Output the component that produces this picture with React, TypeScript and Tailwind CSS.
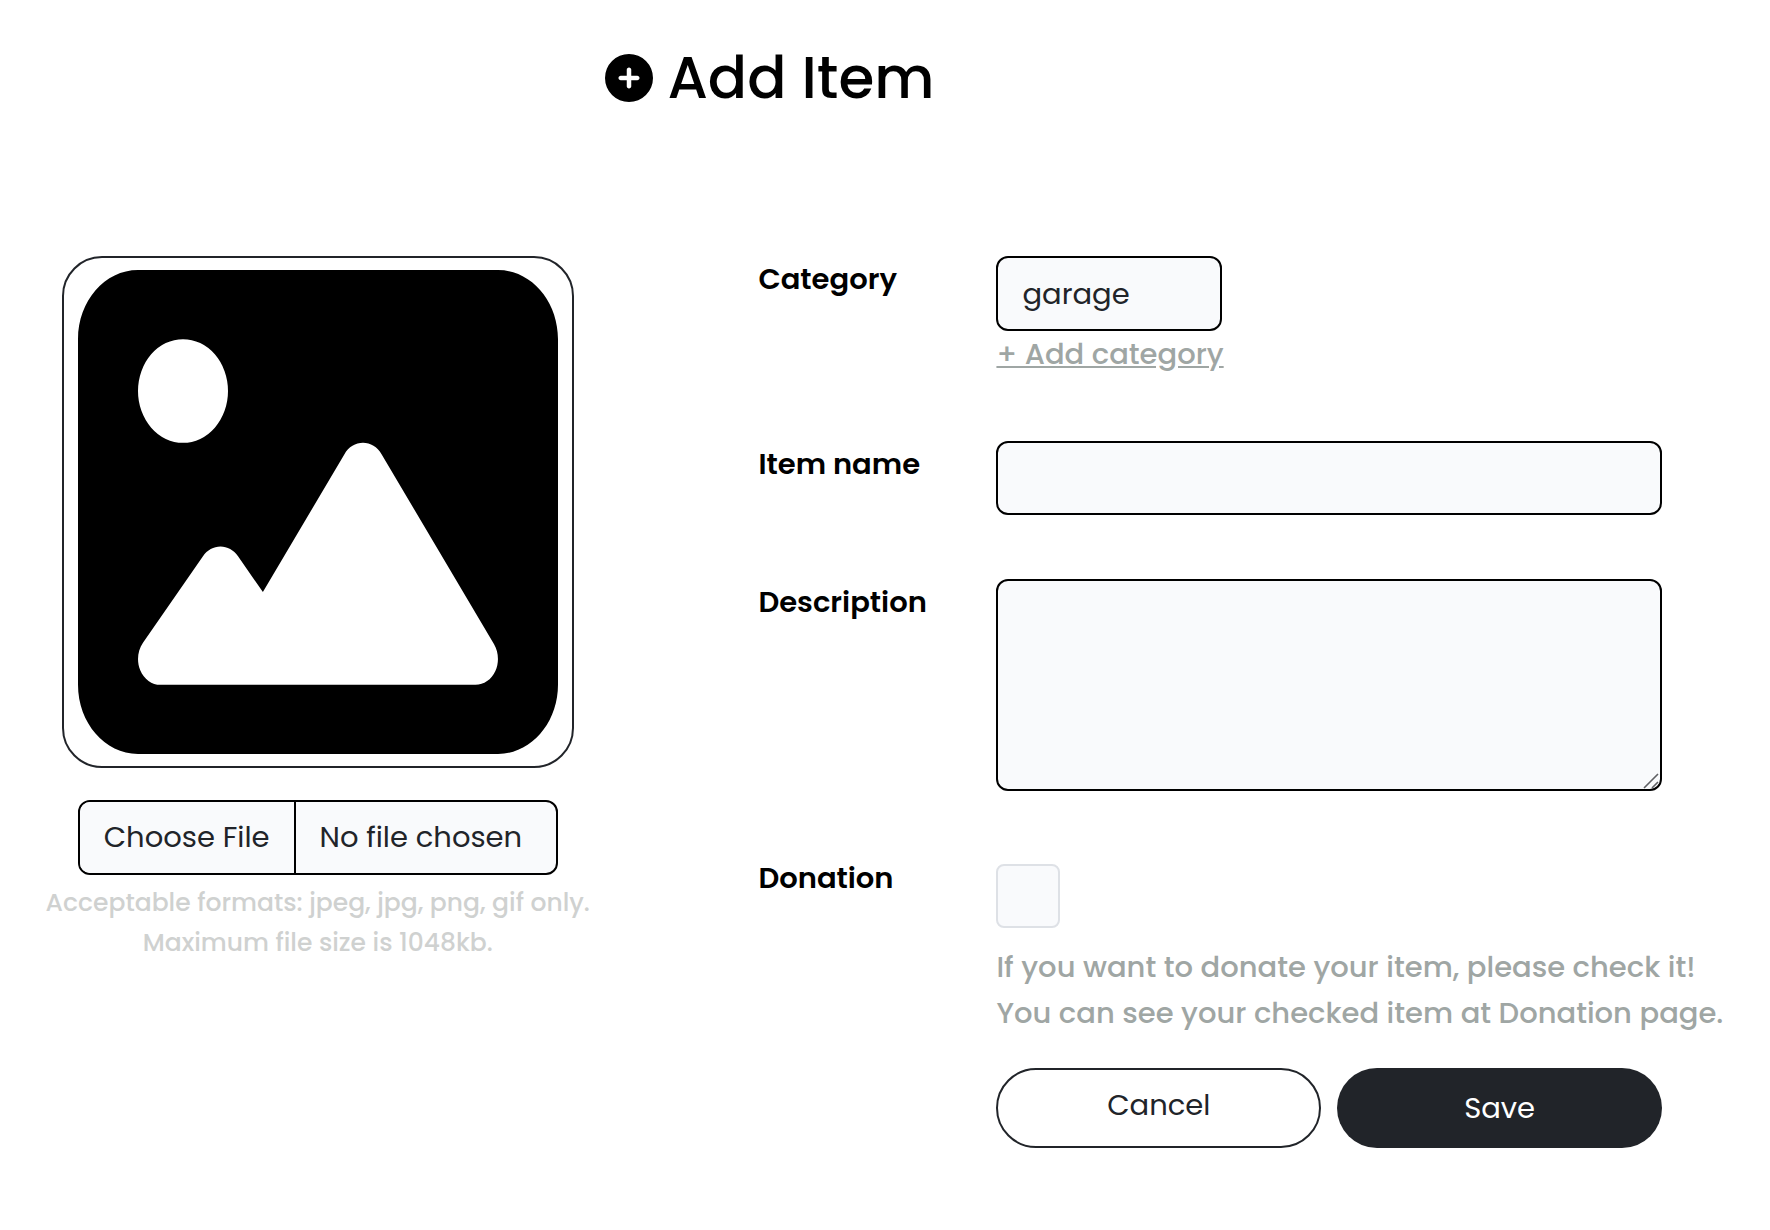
import type { ReactNode } from "react";

const control =
  "border-2 border-black bg-[#f9fafc] text-[#212429] outline-none";

function CirclePlusIcon() {
  return (
    <svg viewBox="0 0 512 512" className="size-12 shrink-0" aria-hidden="true">
      <path
        fill="currentColor"
        d="M256 512A256 256 0 1 0 256 0a256 256 0 1 0 0 512zM232 344V280H168c-13.3 0-24-10.7-24-24s10.7-24 24-24h64V168c0-13.3 10.7-24 24-24s24 10.7 24 24v64h64c13.3 0 24 10.7 24 24s-10.7 24-24 24H280v64c0 13.3-10.7 24-24 24s-24-10.7-24-24z"
      />
    </svg>
  );
}

function ImagePlaceholder() {
  return (
    <svg
      viewBox="0 32 512 448"
      preserveAspectRatio="none"
      className="h-[484px] w-[480px]"
      role="img"
      aria-label="No picture selected"
    >
      <path d="M0 96C0 60.7 28.7 32 64 32H448c35.3 0 64 28.7 64 64V416c0 35.3-28.7 64-64 64H64c-35.3 0-64-28.7-64-64V96zM323.8 202.5c-4.5-6.6-11.9-10.5-19.8-10.5s-15.4 3.9-19.8 10.5l-87 127.6L170.7 297c-4.6-5.7-11.5-9-18.7-9s-14.2 3.3-18.7 9l-64 80c-5.8 7.2-6.9 17.1-2.9 25.4s12.4 13.6 21.6 13.6h96 32H424c8.9 0 17.1-4.9 21.2-12.8s3.6-17.4-1.4-24.7l-120-176zM112 192a48 48 0 1 0 0-96 48 48 0 1 0 0 96z" />
    </svg>
  );
}

function Row({ id, label, children }: { id: string; label: string; children: ReactNode }) {
  return (
    <div className="grid grid-cols-[238px_minmax(0,1fr)] items-start">
      <label htmlFor={id} className="font-semibold text-black">
        {label}
      </label>
      <div>{children}</div>
    </div>
  );
}

export default function App() {
  return (
    <main className="min-h-screen bg-white pt-10 pb-20 font-['Poppins','Inter',sans-serif] text-[29px] leading-[46px]">
      <h1 className="mr-[13%] flex items-center justify-center gap-3.5 text-[58px] leading-[76px] font-medium text-black">
        <CirclePlusIcon />
        Add Item
      </h1>

      <form
        className="mt-[140px] grid grid-cols-[35.9%_minmax(0,1fr)]"
        onSubmit={(event) => event.preventDefault()}
      >
        <section className="flex flex-col items-center">
          <div className="flex size-[512px] items-center justify-center rounded-[40px] border-2 border-[#212429]">
            <ImagePlaceholder />
          </div>
          <input
            type="file"
            aria-label="Item picture"
            accept=".jpeg,.jpg,.png,.gif"
            className={`${control} mt-8 h-[75px] w-[480px] overflow-hidden rounded-xl leading-[71px] file:mr-6 file:h-[71px] file:border-r-2 file:border-solid file:border-black file:bg-[#f9fafc] file:px-6 file:text-[#212429]`}
          />
          <p className="mt-2 text-center text-[25px] leading-10 font-medium whitespace-nowrap text-[#cfd1d0]">
            Acceptable formats: jpeg, jpg, png, gif only.
            <br />
            Maximum file size is 1048kb.
          </p>
        </section>

        <section className="pr-[108px] pl-[123px]">
          <Row id="category" label="Category">
            <select
              id="category"
              className={`${control} block h-[75px] w-[226px] appearance-none rounded-xl px-6`}
            >
              <option>garage</option>
            </select>
            <a href="#category" className="block font-medium whitespace-nowrap text-[#9fa6a4] underline">
              + Add category
            </a>
          </Row>

          <div className="mt-16">
            <Row id="name" label="Item name">
              <input id="name" type="text" className={`${control} block h-[74px] w-full rounded-xl px-6`} />
            </Row>
          </div>

          <div className="mt-16">
            <Row id="description" label="Description">
              <div className="relative">
                <textarea
                  id="description"
                  className={`${control} block h-[212px] w-full rounded-xl px-6 py-3 [&::-webkit-resizer]:hidden`}
                />
                <svg
                  viewBox="0 0 16 16"
                  className="pointer-events-none absolute right-[3px] bottom-[2px] size-4"
                  fill="none"
                  stroke="#5f6064"
                  strokeWidth="1.6"
                  aria-hidden="true"
                >
                  <path d="M1 15 15 1M9 15l6-6" />
                </svg>
              </div>
            </Row>
          </div>

          <div className="mt-16">
            <Row id="donation" label="Donation">
              <input
                id="donation"
                type="checkbox"
                className="mt-[9px] block size-16 appearance-none rounded-lg border-2 border-[#dee1e6] bg-[#f9fafc] checked:bg-[#212429]"
              />
              <p className="mt-4 font-medium whitespace-nowrap text-[#9fa6a4]">
                If you want to donate your item, please check it!
                <br />
                You can see your checked item at Donation page.
              </p>
              <div className="mt-8 grid grid-cols-2 gap-4">
                <button
                  type="button"
                  className="h-20 rounded-full border-2 border-[#212429] bg-white pb-1.5 text-[#212429]"
                >
                  Cancel
                </button>
                <button type="submit" className="h-20 rounded-full bg-[#212429] text-white">
                  Save
                </button>
              </div>
            </Row>
          </div>
        </section>
      </form>
    </main>
  );
}
